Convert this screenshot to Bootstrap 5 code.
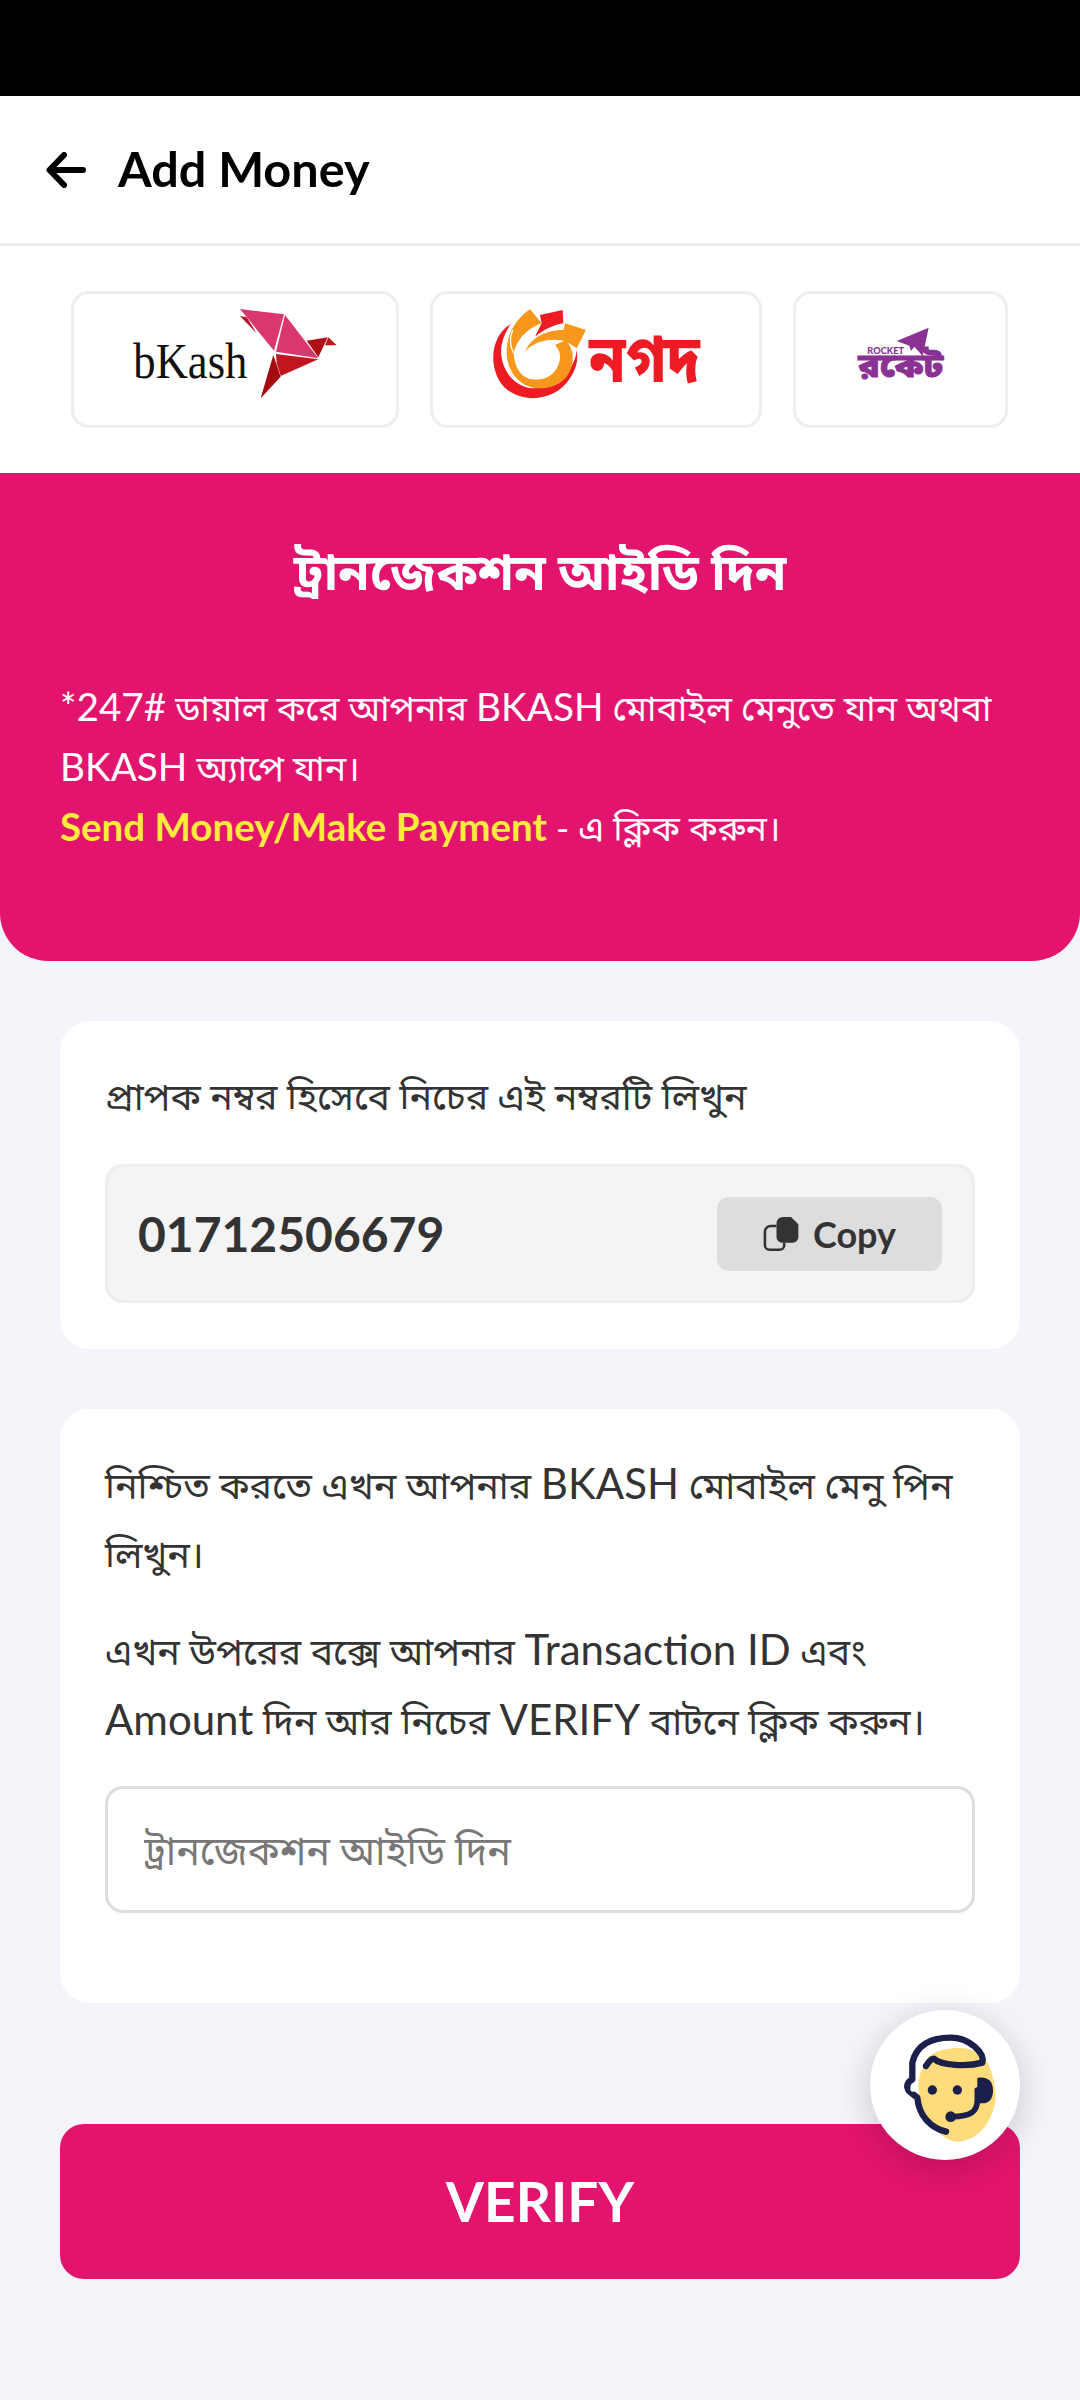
<!DOCTYPE html>
<html lang="bn">
<head>
<meta charset="utf-8">
<title>Add Money</title>
<link href="https://cdn.jsdelivr.net/npm/bootstrap@5.3.0/dist/css/bootstrap.min.css" rel="stylesheet">
<style>
html,body{margin:0;background:#f3f5fa;}
body{font-family:Lato,"Noto Sans Bengali","Noto Sans",sans-serif;width:1080px;height:2400px;position:relative;overflow:hidden;color:#333;}
.status-strip{height:96px;background:#000;}
.top-head{height:150px;background:#fff;border-bottom:3px solid #eee;padding-left:46px;gap:32px;}
.top-head h1{font-size:48.600px;font-weight:700;color:#000;margin:0 0 2px;}
.wallet-row{height:227px;background:#fff;padding:45px 71px;gap:31px;}
.wallet{height:137px;border:3px solid #eee;border-radius:18px;background:#fff;}
.wallet svg{display:block;}
.w-a{width:328px}.w-b{width:332px}.w-c{width:215px}
.hero{height:488px;background:#e3146e;border-radius:0 0 48px 48px;color:#fff;padding:62px 60px 0;}
.hero h2{font-size:51px;font-weight:700;text-align:center;margin:0 0 70px;line-height:72px;}
.hero p{font-size:35.500px;line-height:58px;margin:0;}
.hero .en{font-size:38.700px;}
.hero b{color:#ffeb3b;font-weight:700;font-size:38.500px;}
.panel{background:#fff;border-radius:30px;margin:60px 60px 0;padding:40px 45px 46px;}
.panel p{font-size:37.500px;line-height:69px;margin:0;color:#333;}
.panel .en{font-size:42px;}
.panel p.para-gap{margin-top:27px;}
.num-box{height:139px;margin-top:34px;background:#f4f4f4;border:3px solid #eee;border-radius:18px;padding:0 30px;}
.num-box strong{font-size:48px;font-weight:700;color:#333;}
.copy-btn{width:225px;height:74px;background:#ddd;border:0;border-radius:12px;font-size:36px;font-weight:700;color:#333;gap:14px;padding:0;}
.panel-two{padding-bottom:90px;}
.trx{height:127px;margin-top:31px;border:3px solid #ddd;border-radius:18px;font-size:39.300px;padding:0 36px;color:#333;}
.trx::placeholder{color:#777;}
.verify{display:block;width:960px;height:155px;margin:121px 60px 0;background:#e3146e;border:0;border-radius:24px;color:#fff;font-size:55px;font-weight:700;}
.help-fab{position:absolute;left:870px;top:2010px;width:150px;height:150px;border-radius:50%;background:#fff;box-shadow:0 8px 36px rgba(0,0,0,.18);}
.kash{font-family:"Liberation Serif",serif;font-size:150px;fill:#111;}
.nagad{font-family:"Noto Sans Bengali","Noto Sans",sans-serif;font-weight:800;font-size:200px;fill:#ed1c24;}
.rkt{font-family:Lato,sans-serif;font-weight:900;font-size:28px;fill:#8a3293;}
.rkt-b{font-family:"Noto Sans Bengali","Noto Sans",sans-serif;font-weight:800;font-size:100px;fill:#8a3293;stroke:#8a3293;stroke-width:3px;}
</style>
</head>
<body>
<div class="status-strip"></div>
<header class="top-head d-flex align-items-center">
  <svg width="40" height="36" viewBox="0 0 40 36" aria-hidden="true"><path d="M37 18H4M18 3 3.500 18 18 33" fill="none" stroke="#000" stroke-width="6" stroke-linecap="round" stroke-linejoin="round"/></svg>
  <h1>Add Money</h1>
</header>
<div class="wallet-row d-flex">
  <div class="wallet w-a flex-shrink-0">
    <svg width="322" height="131" viewBox="42 42 966 393" aria-hidden="true">
      <text class="kash" x="220" y="293" textLength="342" lengthAdjust="spacingAndGlyphs">bKash</text>
      <path d="M540 108l20 4 30 48z" fill="#b3122a"/>
      <path d="M540 87l132 16-30 109z" fill="#da3670"/>
      <path d="M675 105l-27 110 127 20z" fill="#da3670"/>
      <path d="M648 222l127 16-113 50-12-38z" fill="#c1161d"/>
      <path d="M640 225l22 65-60 65z" fill="#a30b10"/>
      <path d="M740 182l63-10-28 60z" fill="#ad1115"/>
      <path d="M805 172l25 24h-35z" fill="#c1161d"/>
    </svg>
  </div>
  <div class="wallet w-b flex-shrink-0">
    <svg width="326" height="131" viewBox="39 42 978 393" aria-hidden="true">
      <path d="M272 132C215 165 205 250 240 305c40 65 160 70 210-10 20-30 25-55 20-85-5 60-60 115-130 115-70-5-105-75-95-130 5-25 15-45 27-63z" fill="#ed1c24"/>
      <path d="M330 88l35 42c-30 10-65 35-80 75-5 15-5 30 5 55 12 25 30 38 50 38 35 5 65-15 75-43 10-25 5-45-10-60l33-15c15 20 20 35 20 50 2 55-38 95-98 95-55 0-100-45-100-110 0-55 30-100 70-127z" fill="#f7981d"/>
      <path d="M360 105l68-15 2 40c-30 5-60 20-85 40l20-40z" fill="#ed1c24"/>
      <path d="M435 130l63 20-28 55-30-20c-30-10-90-10-125 30 20-45 65-65 115-65z" fill="#f7981d"/>
      <path d="M278 150c-10 25-8 50 3 70" fill="none" stroke="#fff" stroke-width="4"/>
      <text class="nagad" x="507" y="306" textLength="333" lengthAdjust="spacingAndGlyphs">নগদ</text>
    </svg>
  </div>
  <div class="wallet w-c flex-shrink-0">
    <svg width="209" height="131" viewBox="48 42 627 393" aria-hidden="true">
      <path d="M446 143 350 183l38 14 5 16 10-13 25 28z" fill="#8a3293"/>
      <text class="rkt" x="262" y="221" textLength="110" lengthAdjust="spacingAndGlyphs">ROCKET</text>
      <text class="rkt-b" x="235" y="290" textLength="255" lengthAdjust="spacingAndGlyphs">রকেট</text>
    </svg>
  </div>
</div>
<section class="hero">
  <h2>ট্রানজেকশন আইডি দিন</h2>
  <p><span class="en">*247#</span> ডায়াল করে আপনার <span class="en">BKASH</span> মোবাইল মেনুতে যান অথবা <span class="en">BKASH</span> অ্যাপে যান।<br><b>Send Money/Make Payment</b> - এ ক্লিক করুন।</p>
</section>
<section class="panel">
  <p>প্রাপক নম্বর হিসেবে নিচের এই নম্বরটি লিখুন</p>
  <div class="num-box d-flex align-items-center justify-content-between">
    <strong>01712506679</strong>
    <button class="copy-btn d-flex align-items-center justify-content-center" type="button">
      <svg width="36" height="36" viewBox="216 105 112 110" aria-hidden="true"><path d="M258 135H240a18 18 0 0 0-18 18v42a14 14 0 0 0 14 14h32a14 14 0 0 0 14-14v-8" fill="none" stroke="#333" stroke-width="8"/><path d="M278 107h25l23 23v40a17 17 0 0 1-17 17h-34a17 17 0 0 1-17-17v-43a20 20 0 0 1 20-20z" fill="#333"/></svg>
      <span>Copy</span>
    </button>
  </div>
</section>
<section class="panel panel-two">
  <p>নিশ্চিত করতে এখন আপনার <span class="en">BKASH</span> মোবাইল মেনু পিন লিখুন।</p>
  <p class="para-gap">এখন উপরের বক্সে আপনার <span class="en">Transaction ID</span> এবং <span class="en">Amount</span> দিন আর নিচের <span class="en">VERIFY</span> বাটনে ক্লিক করুন।</p>
  <input class="trx form-control" type="text" placeholder="ট্রানজেকশন আইডি দিন">
</section>
<button class="verify" type="button">VERIFY</button>
<div class="help-fab">
  <svg width="150" height="150" viewBox="90 60 450 450" aria-hidden="true">
    <path d="M280 190c30-15 90-25 130-5 30 15 40 45 45 65 10 30 15 70 10 90-15 70-60 115-115 115-50-5-90-60-110-125-8-35-5-70 5-90 10-25 20-40 35-50z" fill="#fedc7c"/>
    <path d="M258 228c8-12 15-22 24-22 20 20 100 25 145 12 8-30-40-75-95-75-60 0-102 20-115 75v50c-15 8-20 22-10 35 8 8 16 12 25 20 5 55 40 90 86 102" fill="none" stroke="#1b1f4b" stroke-width="19" stroke-linecap="round" stroke-linejoin="round"/>
    <circle cx="219" cy="297" r="8" fill="#fff"/>
    <circle cx="277" cy="300" r="14" fill="#1b1f4b"/><circle cx="352" cy="300" r="14" fill="#1b1f4b"/>
    <path d="M412 264c25-5 47 5 47 38s-22 43-47 36z" fill="#1b1f4b"/>
    <path d="M412 300v30c0 35-20 50-75 50" fill="none" stroke="#1b1f4b" stroke-width="17" stroke-linecap="round"/>
    <circle cx="332" cy="380" r="16" fill="#1b1f4b"/>
  </svg>
</div>
<script src="https://cdn.jsdelivr.net/npm/bootstrap@5.3.0/dist/js/bootstrap.bundle.min.js"></script>
</body>
</html>
